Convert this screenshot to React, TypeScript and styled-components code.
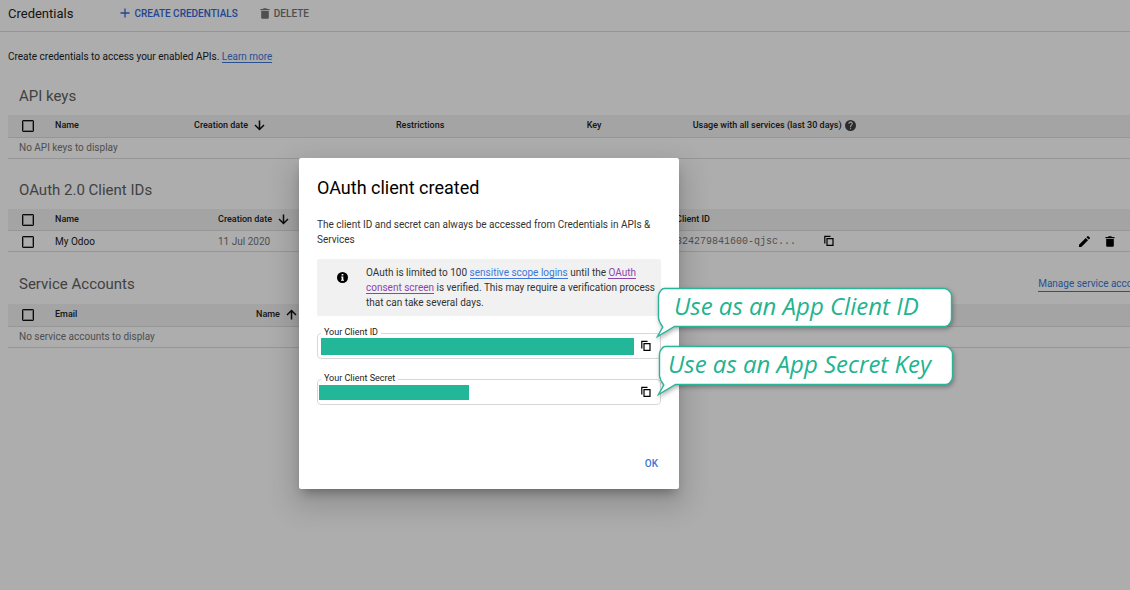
import React from "react";
import styled, { createGlobalStyle } from "styled-components";

const GlobalStyle = createGlobalStyle`
  *, *::before, *::after { box-sizing: border-box; }
  body {
    margin: 0;
    background: #fff;
    color: #212121;
    font-family: Roboto, "Liberation Sans", sans-serif;
    font-size: 10px;
    line-height: 15px;
  }
  button { font: inherit; border: 0; padding: 0; background: none; cursor: pointer; }
`;

const Page = styled.div`
  position: relative;
  min-height: 100vh;
  overflow: hidden;
`;

const TopBar = styled.header`
  display: flex;
  align-items: center;
  height: 32px;
  padding: 0 8px 5px;
  border-bottom: 1px solid #dedede;
`;

const PageTitle = styled.h1`
  margin: 0 47px 0 0;
  font-size: 13px;
  font-weight: 400;
`;

const BarButton = styled.button<{ $muted?: boolean }>`
  && {
    display: flex;
    align-items: center;
    gap: 4px;
    margin-right: 22px;
    font-size: 10px;
    font-weight: 500;
    color: ${(p) => (p.$muted ? "#757575" : "#3367d6")};
  }
`;

const Main = styled.main`
  padding: 17px 0 0 8px;
`;

const Intro = styled.p`
  margin: 0 0 1px;
`;

const Link = styled.a<{ $visited?: boolean }>`
  color: ${(p) => (p.$visited ? "#8e44ad" : "#3b78d8")};
  text-decoration: none;
  border-bottom: 1px solid currentColor;
`;

const Section = styled.section`
  padding-top: 21px;
`;

const SectionHead = styled.div<{ $withLink?: boolean }>`
  display: flex;
  align-items: center;
  justify-content: space-between;
  height: ${(p) => (p.$withLink ? 22 : 20)}px;
  margin: 0 -22px 9px 11px;
`;

const SectionTitle = styled.h2`
  margin: 0;
  font-size: 15px;
  line-height: 20px;
  font-weight: 400;
  color: #616161;
`;

const Table = styled.table`
  width: 100%;
  table-layout: fixed;
  border-collapse: collapse;

  th, td {
    padding: 0;
    text-align: left;
    white-space: nowrap;
    border-bottom: 1px solid #dedede;
  }
  th { height: 22px; background: #f2f2f2; font-size: 9px; font-weight: 500; }
  td { height: 21px; color: #757575; }
`;

const Col = styled.col<{ $width?: string }>`
  width: ${(p) => p.$width ?? "auto"};
`;

const EmptyCell = styled.td`
  && { padding-left: 11px; }
`;

const NameText = styled.span`
  color: #212121;
`;

const Mono = styled.span`
  font-family: "Liberation Mono", monospace;
`;

const Check = styled.input.attrs({ type: "checkbox" })`
  appearance: none;
  display: block;
  width: 12px;
  height: 12px;
  margin: 1px 0 0 14px;
  border: 1px solid #111;
  border-radius: 1px;
  outline: 1px solid rgba(0, 0, 0, 0.35);
  outline-offset: -2px;
`;

const Inline = styled.span<{ $gap?: number; $end?: boolean }>`
  display: flex;
  align-items: center;
  gap: ${(p) => p.$gap ?? 6}px;
  justify-content: ${(p) => (p.$end ? "flex-end" : "flex-start")};
  padding-right: ${(p) => (p.$end ? 15 : 0)}px;
`;

const IconButton = styled.button`
  && { display: flex; color: #000; }
`;

const Overlay = styled.div`
  position: absolute;
  inset: 0;
  display: flex;
  justify-content: center;
  align-items: flex-start;
  padding: 158px 152px 0 0;
  background: rgba(0, 0, 0, 0.32);
`;

const Dialog = styled.div`
  position: relative;
  display: flex;
  flex-direction: column;
  width: 380px;
  min-height: 331px;
  padding: 18px;
  background: #fff;
  border-radius: 2px;
  box-shadow: 0 7px 10px -4px rgba(0, 0, 0, 0.3), 0 12px 28px 6px rgba(0, 0, 0, 0.16);
`;

const DialogTitle = styled.h2`
  margin: 0 0 17px;
  font-size: 18px;
  line-height: 24px;
  font-weight: 400;
  color: #000;
`;

const DialogText = styled.p`
  margin: 0 0 12px;
  color: #333;
`;

const Notice = styled.div`
  display: flex;
  gap: 18px;
  padding: 6px 3px 6px 20px;
  margin-bottom: 17px;
  background: #f1f1f1;
  border-radius: 2px;
  color: #333;

  p { margin: 0; }
  svg { flex: none; margin-top: 7px; }
`;

const Field = styled.div`
  position: relative;
  display: flex;
  align-items: center;
  justify-content: space-between;
  height: 26px;
  margin-bottom: 20px;
  padding: 0 9px 0 1px;
  border: 1px solid #d8d8d8;
  border-radius: 4px;
`;

const FieldLabel = styled.label`
  position: absolute;
  left: 3px;
  top: -8px;
  padding: 0 3px;
  background: #fff;
  font-size: 9px;
  line-height: 12px;
`;

const Masked = styled.input<{ $long?: boolean }>`
  width: ${(p) => (p.$long ? 313 : 150)}px;
  height: ${(p) => (p.$long ? 17 : 15)}px;
  margin-left: ${(p) => (p.$long ? 2 : 0)}px;
  padding: 0;
  border: 0;
  background: #22b799;
`;

const Actions = styled.div`
  display: flex;
  justify-content: flex-end;
  margin-top: auto;
  padding-right: 3px;
`;

const OkButton = styled.button`
  && { font-weight: 500; color: #3b78d8; }
`;

const Callout = styled.div<{ $indent: number; $left: number; $top: number }>`
  position: absolute;
  left: ${(p) => p.$left}px;
  top: ${(p) => p.$top}px;
  z-index: 1;
  width: 300px;
  height: 56px;
  padding-left: ${(p) => p.$indent}px;
  color: #22b38f;
  font-family: "Open Sans", "Noto Sans", sans-serif;
  font-style: italic;
  font-size: 24px;
  line-height: 38px;
  white-space: nowrap;

  svg {
    position: absolute;
    left: 0;
    top: 0;
    filter: drop-shadow(1px 2px 2px rgba(0, 0, 0, 0.3));
  }
  span { position: relative; }
`;

type BubbleProps = { text: string; indent: number; left: number; top: number };

const Bubble = ({ text, indent, left, top }: BubbleProps) => (
  <Callout $indent={indent} $left={left} $top={top}>
    <svg width="300" height="56" viewBox="0 0 300 56" fill="#fff" stroke="#2ab598" strokeWidth="1.4" aria-hidden="true">
      <path d="M8 1.5H289Q292 1.8 294 5Q295.500 6.500 295.500 9V31Q295.500 34 294 36Q292 39.300 289 39.500H18.500L1.500 49.500L6.800 40Q3 35 2.500 31V9Q2.800 6 4.200 4.500Q6 1.500 8 1.500Z" />
    </svg>
    <span>{text}</span>
  </Callout>
);

const Arrow = ({ up }: { up?: boolean }) => (
  <svg width="11" height="11" viewBox="0 0 11 11" fill="none" stroke="#111" strokeWidth="1.5" aria-hidden="true">
    <path d={up ? "M5.500 10.500V1.500M1 6L5.500 1.500L10 6" : "M5.500 .5V9.500M1 5L5.500 9.500L10 5"} />
  </svg>
);

const CopyIcon = () => (
  <svg width="10" height="12" viewBox="0 0 10 12" fill="none" stroke="#000" strokeWidth="1.200" aria-hidden="true">
    <path d="M.8 8.500V1.400H6.500M3 3.600H9V10.400H3Z" />
  </svg>
);

const TrashIcon = () => (
  <svg width="10" height="11" viewBox="0 0 10 11" fill="currentColor" aria-hidden="true">
    <path d="M.5 1H3L3.700 .3H6.300L7 1H9.500V2.200H.5ZM1.200 3H8.800V9.700Q8.800 10.700 7.800 10.700H2.200Q1.200 10.700 1.200 9.700Z" />
  </svg>
);

const PencilIcon = () => (
  <svg width="11" height="11" viewBox="3 3 18 18" fill="currentColor" aria-hidden="true">
    <path d="M3 17.250V21h3.750L17.810 9.940l-3.750-3.750L3 17.250zM20.710 7.040a1 1 0 0 0 0-1.410l-2.340-2.340a1 1 0 0 0-1.410 0l-1.830 1.830 3.750 3.750 1.830-1.830z" />
  </svg>
);

const PlusIcon = () => (
  <svg width="10" height="10" viewBox="0 0 10 10" stroke="currentColor" strokeWidth="1.300" aria-hidden="true">
    <path d="M5 .5V9.500M.5 5H9.500" />
  </svg>
);

const HelpIcon = () => (
  <svg width="11" height="11" viewBox="2 2 20 20" fill="#424242" aria-hidden="true">
    <path d="M12 2a10 10 0 1 0 0 20 10 10 0 0 0 0-20zm1 17h-2v-2h2v2zm2.070-7.750-.9.920C13.450 12.900 13 13.500 13 15h-2v-.5c0-1.100.45-2.100 1.170-2.830l1.240-1.260A2 2 0 1 0 10 9H8a4 4 0 1 1 7.070 2.250z" />
  </svg>
);

const InfoIcon = () => (
  <svg width="11" height="11" viewBox="2 2 20 20" fill="#000" aria-hidden="true">
    <circle cx="12" cy="12" r="10" />
    <path fill="#fff" d="M10.500 5.500h3v3h-3zM9.500 10.200h4v5.800h1.200v2H9.300v-2h1.200v-3.800h-1z" />
  </svg>
);

export default function App() {
  return (
    <Page>
      <GlobalStyle />
      <TopBar>
        <PageTitle>Credentials</PageTitle>
        <BarButton><PlusIcon />CREATE CREDENTIALS</BarButton>
        <BarButton $muted><TrashIcon />DELETE</BarButton>
      </TopBar>
      <Main>
        <Intro>
          Create credentials to access your enabled APIs. <Link href="#learn">Learn more</Link>
        </Intro>

        <Section>
          <SectionHead><SectionTitle>API keys</SectionTitle></SectionHead>
          <Table>
            <colgroup>
              <Col $width="47px" /><Col $width="139px" /><Col $width="18%" /><Col $width="17%" /><Col $width="106px" /><Col />
            </colgroup>
            <thead>
              <tr>
                <th><Check aria-label="Select all API keys" /></th>
                <th>Name</th>
                <th><Inline>Creation date<Arrow /></Inline></th>
                <th>Restrictions</th>
                <th>Key</th>
                <th><Inline $gap={3}>Usage with all services (last 30 days)<HelpIcon /></Inline></th>
              </tr>
            </thead>
            <tbody><tr><EmptyCell colSpan={6}>No API keys to display</EmptyCell></tr></tbody>
          </Table>
        </Section>

        <Section>
          <SectionHead><SectionTitle>OAuth 2.0 Client IDs</SectionTitle></SectionHead>
          <Table>
            <colgroup>
              <Col $width="47px" /><Col $width="163px" /><Col $width="458px" /><Col $width="148px" /><Col /><Col $width="80px" />
            </colgroup>
            <thead>
              <tr>
                <th><Check aria-label="Select all client IDs" /></th>
                <th>Name</th>
                <th><Inline>Creation date<Arrow /></Inline></th>
                <th>Client ID</th>
                <th />
                <th />
              </tr>
            </thead>
            <tbody>
              <tr>
                <td><Check aria-label="Select My Odoo" /></td>
                <td><NameText>My Odoo</NameText></td>
                <td>11 Jul 2020</td>
                <td><Mono>824279841600-qjsc...</Mono></td>
                <td><IconButton aria-label="Copy client ID"><CopyIcon /></IconButton></td>
                <td>
                  <Inline $gap={15} $end>
                    <IconButton aria-label="Edit"><PencilIcon /></IconButton>
                    <IconButton aria-label="Delete"><TrashIcon /></IconButton>
                  </Inline>
                </td>
              </tr>
            </tbody>
          </Table>
        </Section>

        <Section>
          <SectionHead $withLink>
            <SectionTitle>Service Accounts</SectionTitle>
            <Link href="#accounts">Manage service accounts</Link>
          </SectionHead>
          <Table>
            <colgroup><Col $width="47px" /><Col $width="201px" /><Col /></colgroup>
            <thead>
              <tr>
                <th><Check aria-label="Select all service accounts" /></th>
                <th>Email</th>
                <th><Inline>Name<Arrow up /></Inline></th>
              </tr>
            </thead>
            <tbody><tr><EmptyCell colSpan={3}>No service accounts to display</EmptyCell></tr></tbody>
          </Table>
        </Section>
      </Main>

      <Overlay>
        <Dialog role="dialog" aria-labelledby="dialog-title">
          <DialogTitle id="dialog-title">OAuth client created</DialogTitle>
          <DialogText>The client ID and secret can always be accessed from Credentials in APIs &amp; Services</DialogText>
          <Notice>
            <InfoIcon />
            <p>
              OAuth is limited to 100 <Link href="#scopes">sensitive scope logins</Link> until the{" "}
              <Link href="#consent" $visited>OAuth consent screen</Link> is verified. This may require a verification
              process that can take several days.
            </p>
          </Notice>
          <Field>
            <FieldLabel htmlFor="client-id">Your Client ID</FieldLabel>
            <Masked id="client-id" $long readOnly />
            <IconButton aria-label="Copy your client ID"><CopyIcon /></IconButton>
            <Bubble text="Use as an App Client ID" indent={18} left={338} top={-47} />
          </Field>
          <Field>
            <FieldLabel htmlFor="client-secret">Your Client Secret</FieldLabel>
            <Masked id="client-secret" readOnly />
            <IconButton aria-label="Copy your client secret"><CopyIcon /></IconButton>
            <Bubble text="Use as an App Secret Key" indent={11} left={339} top={-35} />
          </Field>
          <Actions><OkButton>OK</OkButton></Actions>
        </Dialog>
      </Overlay>
    </Page>
  );
}
